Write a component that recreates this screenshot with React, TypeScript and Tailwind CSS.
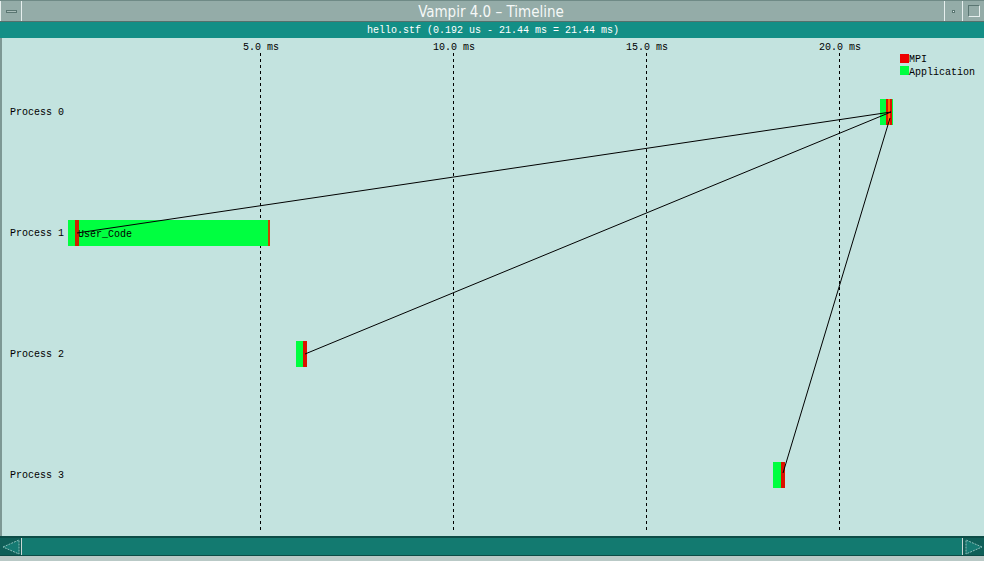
import React from "react";

const mono = { fontFamily: '"Liberation Mono", "DejaVu Sans Mono", monospace' };

export default function App() {
  const ticks = [
    { x: 260, label: "5.0 ms" },
    { x: 453, label: "10.0 ms" },
    { x: 646, label: "15.0 ms" },
    { x: 839, label: "20.0 ms" },
  ];
  const procs = [112, 233, 354, 475];
  return (
    <div className="w-[984px] h-[561px] flex flex-col bg-[#b9c9c6] overflow-hidden">
      {/* title bar */}
      <div className="h-[22px] flex bg-[#94aca8] border-t border-[#6f8a86] border-b border-b-[#55706c]">
        <div className="w-[22px] h-full flex items-center justify-center border-r border-[#e6efee] border-l border-l-[#e6efee]">
          <div className="w-[11px] h-[3px] bg-[#a9bdb9] border border-[#5a7672]" />
        </div>
        <div
          className="flex-1 flex items-center justify-center text-[#f4f8f7] text-[15px] pl-[16px] pt-[3px]"
          style={{ fontFamily: '"DejaVu Sans Condensed", "DejaVu Sans", sans-serif', fontStretch: "condensed", fontWeight: 300 }}
        >
          Vampir 4.0 – Timeline
        </div>
        <div className="w-[18px] h-full flex items-center justify-center border-l border-[#e6efee]">
          <div className="w-[3px] h-[3px] bg-[#e6efee] border border-[#5a7672]" />
        </div>
        <div className="w-[22px] h-full flex items-center justify-center border-l border-[#e6efee]">
          <div className="w-[12px] h-[12px] border border-t-[#5a7672] border-l-[#5a7672] border-r-[#e6efee] border-b-[#e6efee]" />
        </div>
      </div>
      {/* subtitle */}
      <div
        className="h-[16px] bg-[#138f86] text-white text-[10px] flex items-center justify-center pl-[2px] pt-[1px]"
        style={mono}
      >
        hello.stf (0.192 us - 21.44 ms = 21.44 ms)
      </div>
      {/* canvas */}
      <div className="h-[498px] bg-[#c3e3df] border-l-2 border-[#7d9894]">
        <svg width="982" height="498" viewBox="2 38 982 498" style={mono}>
          {ticks.map((t) => (
            <g key={t.x}>
              <text x={t.x + 1} y={50} fontSize="10" textAnchor="middle" fill="#000">
                {t.label}
              </text>
              <line x1={t.x + 0.5} y1={53} x2={t.x + 0.5} y2={532} stroke="#000" strokeDasharray="3 3" />
            </g>
          ))}
          {/* legend */}
          <rect x={900} y={54} width={9} height={9} fill="#ee0000" />
          <text x={909} y={62} fontSize="10" fill="#000">MPI</text>
          <rect x={900} y={66} width={9} height={9} fill="#00ff40" />
          <text x={909} y={75} fontSize="10" fill="#000">Application</text>
          {procs.map((y, i) => (
            <text key={y} x={10} y={y + 3} fontSize="10" fill="#000">
              Process {i}
            </text>
          ))}
          {/* process 0 */}
          <rect x={880} y={99} width={13} height={26} fill="#00ff40" />
          <rect x={886} y={99} width={6} height={26} fill="#dd1100" />
          <rect x={888} y={99} width={2} height={26} fill="#ff6a00" />
          {/* process 1 */}
          <rect x={68} y={220} width={202} height={26} fill="#00ff40" />
          <rect x={75} y={220} width={4} height={26} fill="#cc2200" />
          <rect x={268} y={220} width={2} height={26} fill="#cc4400" />
          <text x={78} y={237} fontSize="10" fill="#000">User_Code</text>
          {/* process 2 */}
          <rect x={296} y={341} width={8} height={26} fill="#00ff40" />
          <rect x={303} y={341} width={4} height={26} fill="#dd1100" />
          {/* process 3 */}
          <rect x={773} y={462} width={8} height={26} fill="#00ff40" />
          <rect x={781} y={462} width={4} height={26} fill="#dd1100" />
          {/* messages */}
          <line x1={77} y1={233} x2={891} y2={112} stroke="#000" />
          <line x1={305} y1={354} x2={891} y2={112} stroke="#000" />
          <line x1={783} y1={473} x2={890} y2={118} stroke="#000" />
        </svg>
      </div>
      {/* scrollbar */}
      <div className="h-[20px] flex bg-[#137a70] border-t-2 border-[#0c4c46] border-b border-b-[#0c4c46]">
        <div className="w-[22px] h-full flex items-center justify-center border-r border-[#c9d8d5] bg-[#0f5f58]">
          <svg width="18" height="16" viewBox="0 0 18 16">
            <polygon points="1,8 17,1 17,15" fill="#157a72" stroke="#8cc0ba" strokeWidth="1" strokeDasharray="2 1" />
          </svg>
        </div>
        <div className="flex-1" />
        <div className="w-[22px] h-full flex items-center justify-center border-l border-[#c9d8d5] bg-[#0f5f58]">
          <svg width="18" height="16" viewBox="0 0 18 16">
            <polygon points="17,8 1,1 1,15" fill="#157a72" stroke="#8cc0ba" strokeWidth="1" strokeDasharray="2 1" />
          </svg>
        </div>
      </div>
      <div className="flex-1 bg-[#b9c9c6]" />
    </div>
  );
}
